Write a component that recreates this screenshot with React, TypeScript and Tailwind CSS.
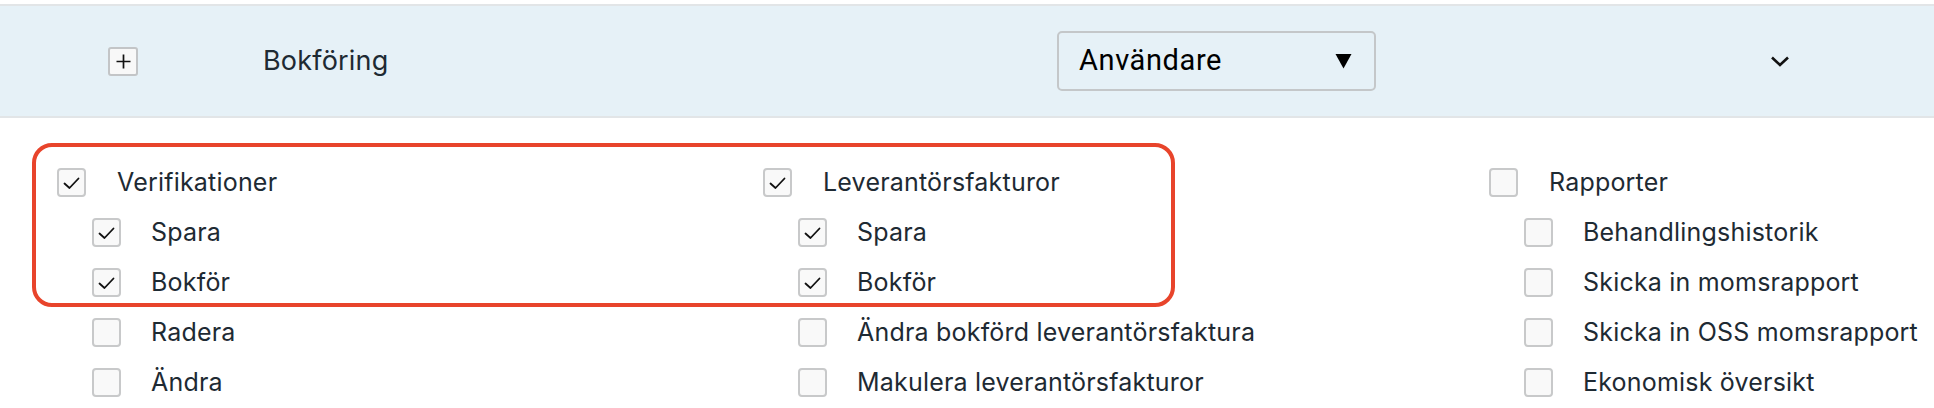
const columns = [
  {
    width: 'w-[706px]',
    title: 'Verifikationer',
    checked: true,
    items: [
      { label: 'Spara', checked: true },
      { label: 'Bokför', checked: true },
      { label: 'Radera', checked: false },
      { label: 'Ändra', checked: false },
    ],
  },
  {
    width: 'w-[726px]',
    title: 'Leverantörsfakturor',
    checked: true,
    items: [
      { label: 'Spara', checked: true },
      { label: 'Bokför', checked: true },
      { label: 'Ändra bokförd leverantörsfaktura', checked: false },
      { label: 'Makulera leverantörsfakturor', checked: false },
    ],
  },
  {
    width: 'flex-1',
    title: 'Rapporter',
    checked: false,
    items: [
      { label: 'Behandlingshistorik', checked: false },
      { label: 'Skicka in momsrapport', checked: false },
      { label: 'Skicka in OSS momsrapport', checked: false },
      { label: 'Ekonomisk översikt', checked: false },
    ],
  },
];

function Checkbox({ checked }: { checked: boolean }) {
  return (
    <div className="w-[29px] h-[29px] shrink-0 rounded-[4px] border-2 border-[#c8c9ca] bg-[#f9f9f9] flex items-center justify-center">
      {checked && (
        <svg width="25" height="25" viewBox="0 0 25 25" fill="none">
          <path d="M5.5 13.5 L10.5 18 L19.5 8.5" stroke="#111" strokeWidth="1.8" strokeLinecap="round" strokeLinejoin="round" />
        </svg>
      )}
    </div>
  );
}

export default function App() {
  return (
    <div className="w-[1934px] h-[408px] bg-white overflow-hidden relative" style={{ fontFamily: 'Inter, "Noto Sans", sans-serif' }}>
      <div className="h-[4px] bg-white" />
      {/* header */}
      <div className="h-[114px] bg-[#e6f1f7] border-t-2 border-b-2 border-[#e2e5e7] flex items-center">
        <div className="ml-[108px] w-[30px] h-[29px] rounded-[3px] border-2 border-[#c3c5c7] bg-[#f8f8f8] flex items-center justify-center">
          <svg width="17" height="17" viewBox="0 0 17 17">
            <path d="M8.5 1.5 V15.5 M1.5 8.5 H15.5" stroke="#111" strokeWidth="1.7" />
          </svg>
        </div>
        <div className="ml-[125px] w-[794px]">
          <span className="text-[27px] text-[#1e2a33] tracking-[0.2px]">Bokföring</span>
        </div>
        <div
          className="w-[319px] h-[60px] rounded-[5px] border-2 border-[#c4c7c9] flex items-center justify-between pl-[20px] pr-[22px]"
          style={{ fontFamily: 'Roboto, sans-serif' }}
        >
          <span className="text-[29px] text-black tracking-[0.6px]">Användare</span>
          <svg width="17" height="16" viewBox="0 0 17 16">
            <path d="M0.5 1 H16.5 L8.5 15.5 Z" fill="#000" />
          </svg>
        </div>
        <svg className="ml-[394px]" width="20" height="13" viewBox="0 0 20 13" fill="none">
          <path d="M2 2.5 L10 10 L18 2.5" stroke="#111" strokeWidth="2.6" />
        </svg>
      </div>

      {/* body */}
      <div className="flex pt-[50px] pl-[57px]">
        {columns.map((col) => (
          <div key={col.title} className={`${col.width} flex flex-col`}>
            <div className="h-[50px] flex items-start gap-[31px]">
              <Checkbox checked={col.checked} />
              <span className="text-[25px] leading-[29px] tracking-[0.2px] text-[#1e2a33] whitespace-nowrap">{col.title}</span>
            </div>
            {col.items.map((it) => (
              <div key={it.label} className="h-[50px] flex items-start gap-[30px] pl-[35px]">
                <Checkbox checked={it.checked} />
                <span className="text-[25px] leading-[29px] tracking-[0.2px] text-[#1e2a33] whitespace-nowrap">{it.label}</span>
              </div>
            ))}
          </div>
        ))}
      </div>

      {/* annotation */}
      <div className="absolute left-[32px] top-[143px] w-[1143px] h-[164px] border-[4px] border-[#e8442b] rounded-[20px] pointer-events-none" />
    </div>
  );
}
